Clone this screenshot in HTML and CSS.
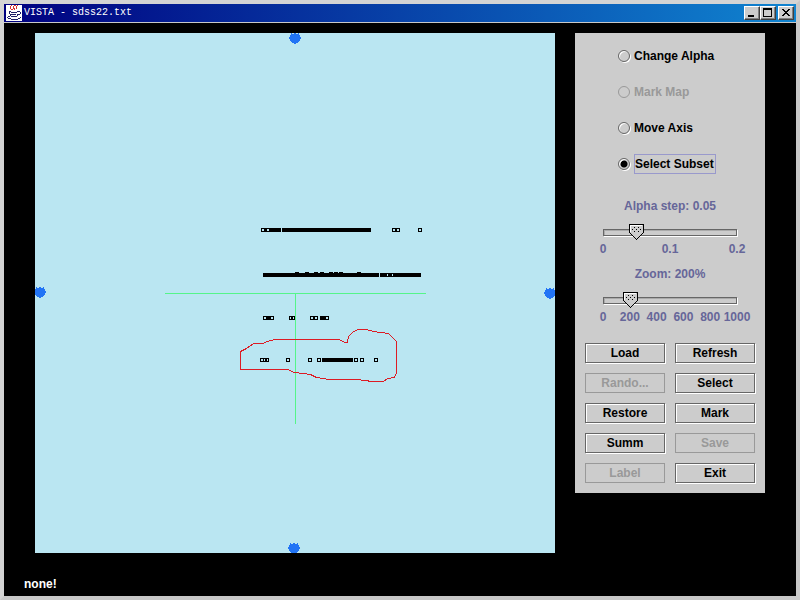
FILE: index.html
```html
<!DOCTYPE html>
<html lang="en">
  <head>
    <meta charset="UTF-8" />
    <meta name="viewport" content="width=device-width, initial-scale=1.0" />
    <title>VISTA - sdss22.txt</title>
    <link rel="stylesheet" href="styles.css">
  </head>
  <body>
    <div class="window">
      <header class="titlebar">
        <svg class="app-icon" viewBox="0 0 16 16" width="16" height="16" aria-hidden="true">
          <rect width="16" height="16" fill="#fff" />
          <path d="M5 0h1v1H5zM4 1h1v3H4zM5 4h2v1H5zM7 1h1v3H7zM8 0h2v1H8zM8 3h1v2H8zM10 1h1v3h-1zM11 0h1v1h-1z" fill="#d83030" />
          <path d="M3 6h2v1H3zM5 7h6v1H5zM3 7h1v2H3zM4 9h1v2H4zM5 11h6v1H5zM11 9h1v2h-1zM11 6h3v1h-3zM14 7h1v2h-1zM12 9h2v1h-2zM5 9h5v1H5zM2 11h2v1H2zM1 12h1v1H1zM2 13h3v1H2zM5 14h7v1H5zM12 13h2v1h-2zM14 12h1v1h-1z" fill="#202068" />
        </svg>
        <h1 class="title">VISTA - sdss22.txt</h1>
        <div class="window-buttons">
          <button type="button" aria-label="Minimize">
            <svg viewBox="0 0 12 10" width="12" height="10"><path d="M2 7h6v2H2z" /></svg>
          </button>
          <button type="button" aria-label="Maximize">
            <svg viewBox="0 0 12 10" width="12" height="10"><path fill-rule="evenodd" d="M1 0h9v9H1zM2 2h7v6H2z" /></svg>
          </button>
          <button type="button" class="close" aria-label="Close">
            <svg viewBox="0 0 12 10" width="12" height="10"><path d="M2 1h2v1h1v1h2V2h1V1h2v1H9v1H8v1H7v1h1v1h1v1h1v1H8V7H7V6H5v1H4v1H2V7h1V6h1V5h1V4H4V3H3V2H2z" /></svg>
          </button>
        </div>
      </header>

      <main class="content">
        <svg class="map" viewBox="0 0 520 520" role="img" aria-label="Cluster map">
          <defs>
            <path id="handle" d="M-1-5h2v1h2v-1h1v2h1v2h1v2h-1v2h-1v1h-1v1h-2v1h-2v-1h-2v-1h-1v-1h-1v-2h-1v-2h1v-2h1v-2h1v1h2z" />
            <path id="point" fill-rule="evenodd" d="M0 0h4v4H0zM1 1v2h2V1z" />
          </defs>

          <g class="axes">
            <rect x="130" y="260" width="261" height="1" />
            <rect x="260" y="260" width="1" height="131" />
          </g>

          <g class="handles">
            <use href="#handle" x="260" y="5" />
            <use href="#handle" x="5" y="259" />
            <use href="#handle" x="515" y="260" />
            <use href="#handle" x="259" y="515" />
          </g>

          <!-- first band -->
          <g>
            <use href="#point" x="226" y="195" />
            <use href="#point" x="231" y="195" />
            <path d="M229 195h3v4h-3zM234 195h12v4h-12zM247 195h89v4h-89z" />
            <use href="#point" x="357" y="195" />
            <use href="#point" x="361" y="195" />
            <use href="#point" x="383" y="195" />
          </g>

          <!-- second band -->
          <g>
            <path d="M228 240h116v4H228zM345 240h7v4h-7zM353 240h4v4h-4zM358 240h28v4h-28z" />
            <path d="M352 240h1v1h-1zM352 243h1v1h-1zM357 240h1v1h-1zM357 243h1v1h-1z" />
            <path d="M260 239h4v1h-4zM270 239h4v1h-4zM279 239h4v1h-4zM285 239h4v1h-4zM294 239h4v1h-4zM299 239h4v1h-4zM304 239h4v1h-4zM322 239h4v1h-4z" />
          </g>

          <!-- third band -->
          <g>
            <use href="#point" x="228" y="283" />
            <path d="M231 283h5v4h-5z" />
            <use href="#point" x="235" y="283" />
            <use href="#point" x="254" y="283" />
            <use href="#point" x="256" y="283" />
            <use href="#point" x="275" y="283" />
            <use href="#point" x="279" y="283" />
            <path d="M285 283h5v4h-5z" />
            <use href="#point" x="286" y="283" />
            <use href="#point" x="290" y="283" />
          </g>

          <!-- fourth band -->
          <g>
            <use href="#point" x="225" y="325" />
            <use href="#point" x="228" y="325" />
            <use href="#point" x="230" y="325" />
            <use href="#point" x="251" y="325" />
            <use href="#point" x="273" y="325" />
            <use href="#point" x="282" y="325" />
            <path d="M287 325h31v4h-31z" />
            <use href="#point" x="319" y="325" />
            <use href="#point" x="325" y="325" />
            <use href="#point" x="339" y="325" />
          </g>

          <path class="lasso" d="M205.500 318.500l6-3 7-5h9l5-2 7-2h65l5 3h3l1-6 5-5 5-2h8l7 2 15 2 8 8v31l-2 5-7 1-4 3h-11l-16-2h-27l-13-2-6-3-16-2-7-3h-47z" />
        </svg>

        <form class="panel">
          <fieldset class="modes">
            <label class="mode"><input type="radio" name="mode"><span>Change Alpha</span></label>
            <label class="mode disabled"><input type="radio" name="mode" disabled><span>Mark Map</span></label>
            <label class="mode"><input type="radio" name="mode"><span>Move Axis</span></label>
            <label class="mode"><input type="radio" name="mode" checked><span>Select Subset</span></label>
          </fieldset>

          <div class="slider">
            <label for="alpha">Alpha step: 0.05</label>
            <div class="slider-control">
              <div class="track"></div>
              <input type="range" id="alpha" min="0" max="0.2" step="0.01" value="0.05">
            </div>
            <div class="ticks"><span>0</span><span>0.1</span><span>0.2</span></div>
          </div>

          <div class="slider">
            <label for="zoom">Zoom: 200%</label>
            <div class="slider-control">
              <div class="track"></div>
              <input type="range" id="zoom" min="0" max="1000" step="10" value="200">
            </div>
            <div class="ticks"><span>0</span><span>200</span><span>400</span><span>600</span><span>800</span><span>1000</span></div>
          </div>

          <div class="actions">
            <button type="button">Load</button>
            <button type="button">Refresh</button>
            <button type="button" disabled>Rando...</button>
            <button type="button">Select</button>
            <button type="button">Restore</button>
            <button type="button">Mark</button>
            <button type="button">Summ</button>
            <button type="button" disabled>Save</button>
            <button type="button" disabled>Label</button>
            <button type="button">Exit</button>
          </div>
        </form>
      </main>

      <footer class="status">none!</footer>
    </div>
  </body>
</html>
```
FILE: styles.css
```css
:root {
  --metal: #cccccc;
  --metal-dark: #666666;
  --metal-disabled: #999999;
  --metal-blue: #666699;
  --map-color: #bae6f2;
}

* {
  margin: 0;
  padding: 0;
  box-sizing: border-box;
}

body {
  background-color: #000;
  font-family: 'Liberation Sans', Arial, sans-serif;
  font-size: 12px;
  font-weight: 700;
  line-height: 16px;
  color: #000;
}

.window {
  display: flex;
  flex-direction: column;
  min-height: 100vh;
  border: 4px solid #c8c8c8;
  border-top-color: #d4d4d4;
  border-left-color: #d4d4d4;
}

/* title bar */
.titlebar {
  display: flex;
  align-items: center;
  height: 19px;
  padding: 0 2px;
  border-bottom: 1px solid #c8c8c8;
  background: linear-gradient(to right, #000080, #1084d0);
}

.app-icon {
  shape-rendering: crispEdges;
}

.title {
  flex: 1;
  padding-left: 2px;
  font-family: 'Liberation Mono', monospace;
  font-size: 10px;
  font-weight: 400;
  line-height: 18px;
  color: #fff;
}

.window-buttons {
  display: flex;
}

.window-buttons button {
  display: flex;
  align-items: center;
  justify-content: center;
  width: 16px;
  height: 14px;
  border: 1px solid;
  border-color: #fff #404040 #404040 #fff;
  background-color: var(--metal);
  box-shadow: inset -1px -1px 0 #808080;
}

.window-buttons .close {
  margin-left: 2px;
}

.window-buttons svg {
  flex: none;
  shape-rendering: crispEdges;
}

/* main area */
.content {
  display: flex;
  align-items: flex-start;
  gap: 20px;
  padding: 10px 31px 0;
}

.map {
  flex: 1;
  min-width: 0;
  background-color: var(--map-color);
  shape-rendering: crispEdges;
}

.axes {
  fill: #55f58a;
}

.handles {
  fill: #2274f5;
}

.lasso {
  fill: none;
  stroke: #dd1c24;
  stroke-width: 1;
}

.panel {
  flex: none;
  width: 190px;
  padding: 5px 10px 10px;
  background-color: var(--metal);
}

/* radio buttons */
.modes {
  border: none;
  padding-left: 33px;
}

.mode {
  display: flex;
  align-items: center;
  height: 36px;
}

.mode input {
  appearance: none;
  width: 12px;
  height: 12px;
  margin-right: 4px;
  border: 1px solid var(--metal-dark);
  border-radius: 50%;
  box-shadow: 1px 1px 0 #fff, inset 1px 1px 0 #fff;
}

.mode input:checked {
  background: radial-gradient(circle, #000 3px, transparent 4px);
}

.mode span {
  padding: 1px 0;
  border: 1px solid transparent;
  border-left: none;
}

.mode input:checked + span {
  padding-right: 1px;
  border: 1px solid #9999cc;
}

.mode.disabled {
  color: var(--metal-disabled);
}

.mode.disabled input {
  border-color: var(--metal-disabled);
  box-shadow: none;
}

/* sliders */
.slider {
  padding: 0 11px;
  margin-top: 16px;
  color: var(--metal-blue);
}

.slider + .slider {
  margin-top: 9px;
}

.slider label {
  display: block;
  text-align: center;
}

.slider-control {
  display: grid;
  align-items: center;
  margin-top: 10px;
}

.track,
.slider-control input {
  grid-area: 1 / 1;
}

.track {
  height: 7px;
  margin: 0 7px;
  border: 1px solid var(--metal-dark);
  box-shadow: 1px 1px 0 #fff, inset 1px 1px 0 #aaa;
}

.slider-control input {
  appearance: none;
  width: 100%;
  height: 17px;
  background: transparent;
}

.slider-control input::-webkit-slider-thumb {
  appearance: none;
  width: 15px;
  height: 17px;
  border: none;
  background: url("data:image/svg+xml,%3Csvg xmlns='http://www.w3.org/2000/svg' width='15' height='17' shape-rendering='crispEdges'%3E%3Cpath d='M.5 .5h14v8l-7 7-7-7z' fill='%23ccc' stroke='%23000'/%3E%3Cpath d='M1.5 8V1.500H13' fill='none' stroke='%23fff'/%3E%3Cpath d='M3 5h1v1h-1zM5 3h1v1h-1zM7 5h1v1h-1zM9 3h1v1h-1zM11 5h1v1h-1zM5 7h1v1h-1zM9 7h1v1h-1z'/%3E%3C/svg%3E") no-repeat;
}

.ticks {
  display: flex;
  justify-content: space-between;
  padding: 0 7px;
}

.ticks span {
  display: flex;
  justify-content: center;
  width: 0;
}

/* action buttons */
.actions {
  display: grid;
  grid-template-columns: 1fr 1fr;
  gap: 10px;
  margin-top: 18px;
}

.actions button {
  height: 20px;
  border: 1px solid var(--metal-dark);
  background-color: var(--metal);
  box-shadow: 1px 1px 0 #fff, inset 1px 1px 0 #fff;
  font: inherit;
  color: #000;
}

.actions button:disabled {
  border-color: var(--metal-disabled);
  box-shadow: none;
  color: var(--metal-disabled);
}

.status {
  padding: 23px 20px 4px;
  color: #fff;
}
```
